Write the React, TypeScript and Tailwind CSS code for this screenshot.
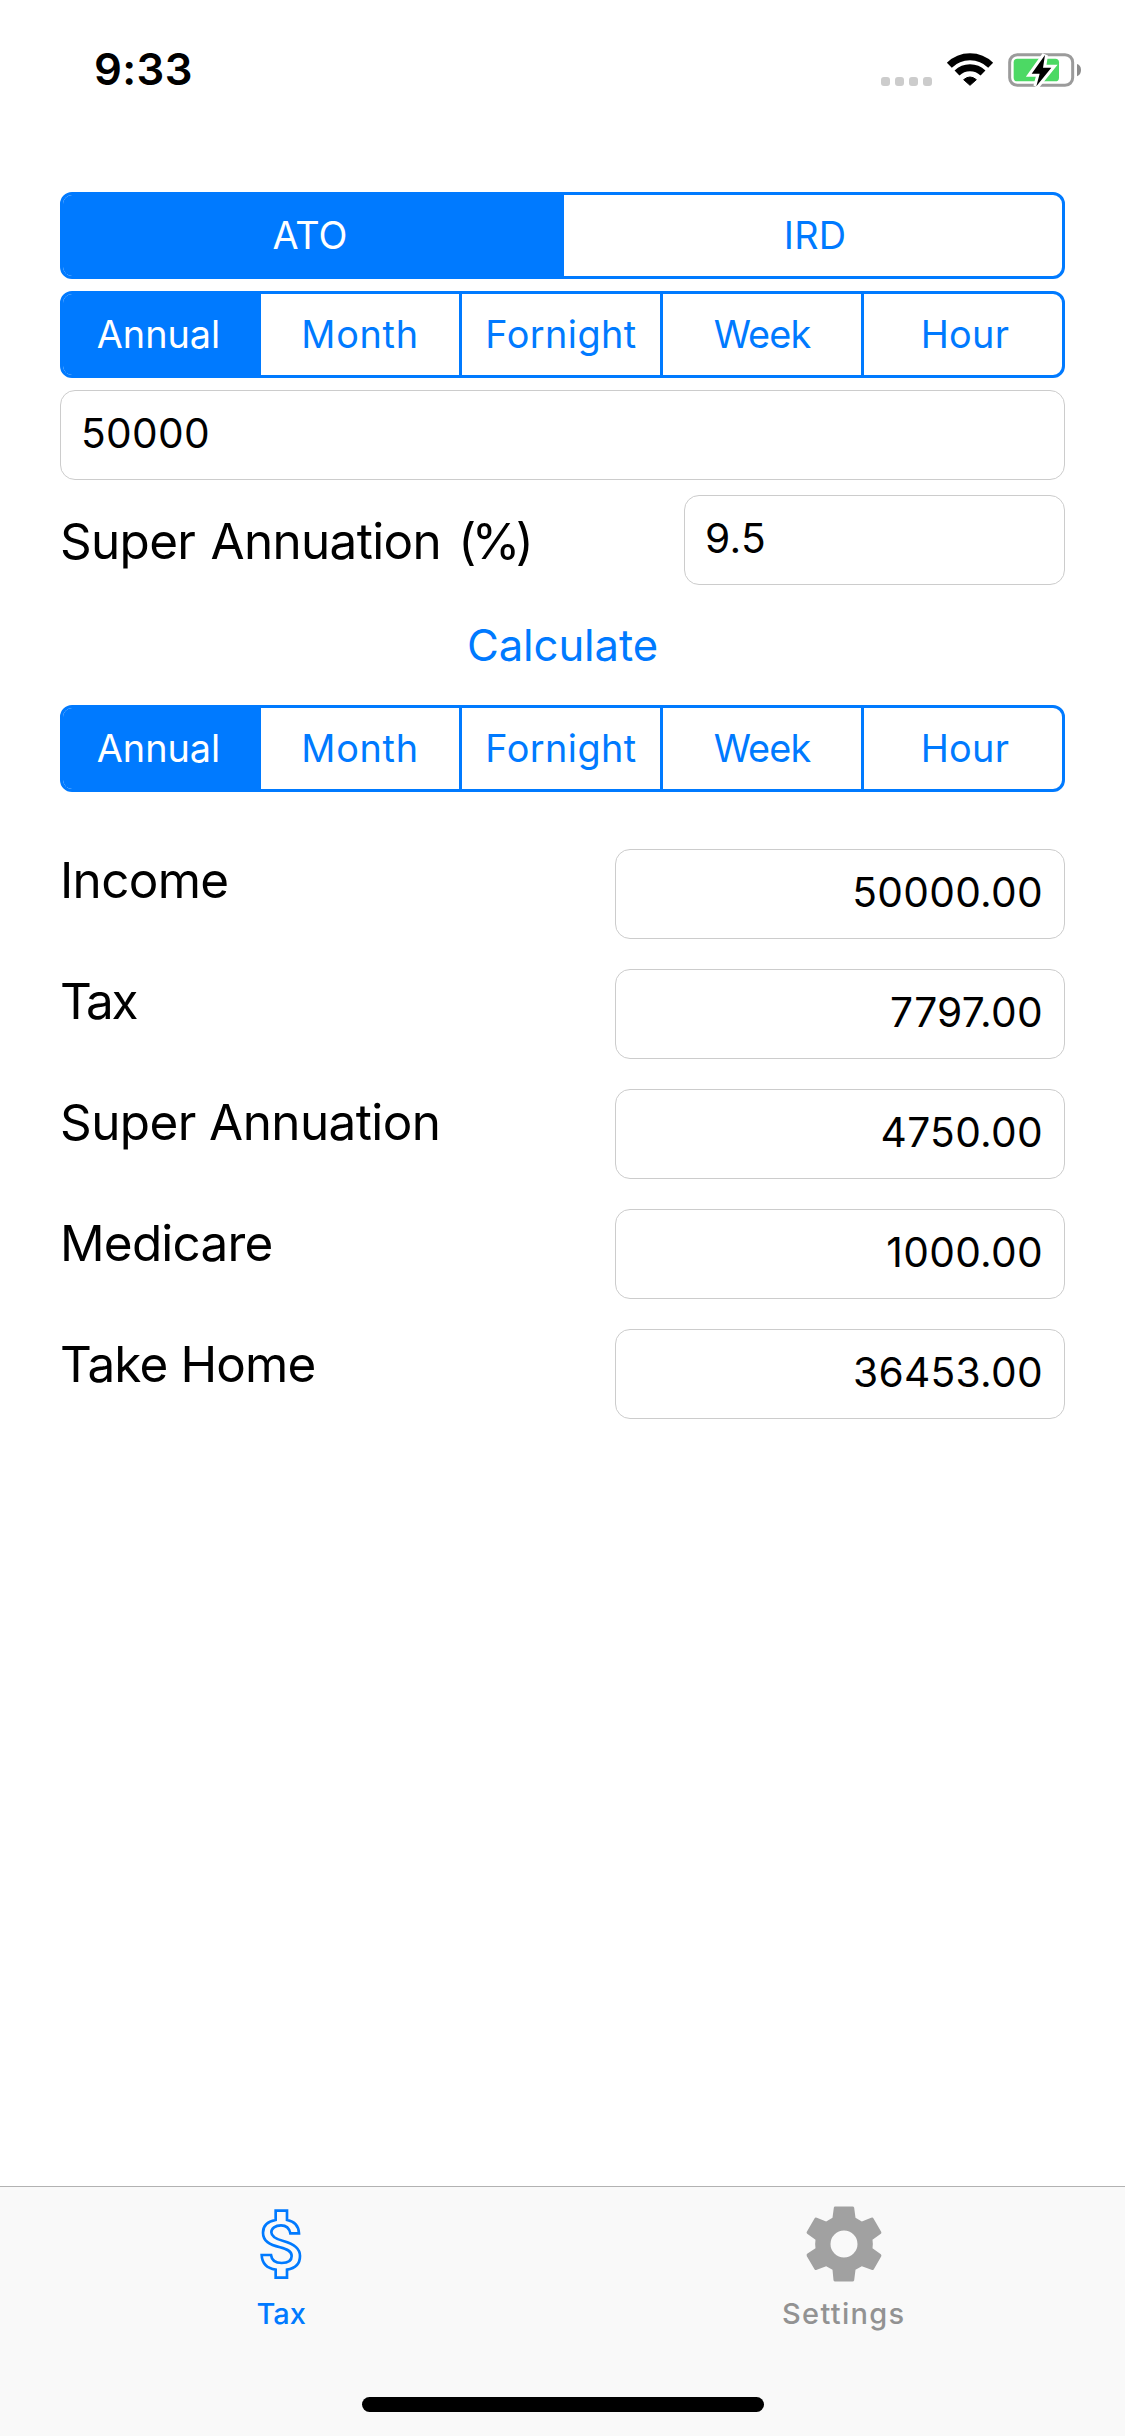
import React, { useState } from "react";
import clsx from "clsx";

type Item = { label: string; tracking?: string };

const authorities: Item[] = [
  { label: "ATO" },
  { label: "IRD", tracking: "tracking-[0.2px]" },
];

const periods: Item[] = [
  { label: "Annual" },
  { label: "Month", tracking: "tracking-[0.72px]" },
  { label: "Fornight", tracking: "tracking-[0.45px]" },
  { label: "Week", tracking: "tracking-[-0.87px]" },
  { label: "Hour", tracking: "tracking-[0.3px]" },
];

const results = [
  { label: "Income", value: "50000.00", tracking: "tracking-[-0.65px]" },
  { label: "Tax", value: "7797.00", tracking: "tracking-[-2.2px]" },
  { label: "Super Annuation", value: "4750.00", tracking: "tracking-[-0.55px]" },
  { label: "Medicare", value: "1000.00", tracking: "tracking-[-0.76px]" },
  { label: "Take Home", value: "36453.00", tracking: "tracking-[-0.85px]" },
];

function Segmented({ items }: { items: Item[] }) {
  const [active, setActive] = useState(0);
  const last = items.length - 1;
  return (
    <div className="flex h-[87px] w-full overflow-hidden rounded-[12px] border-[3px] border-[#007aff] bg-white">
      {items.map((item, i) => (
        <button
          key={item.label}
          onClick={() => setActive(i)}
          className={clsx(
            "flex items-center justify-center border-[#007aff] text-[37.8px] leading-none",
            i < last && "border-r-[3px]",
            items.length === 2 && (i === 0 ? "w-[501px]" : "w-[498px]"),
            items.length === 5 && (i === 0 || i === last ? "w-[198px]" : "w-[201px]"),
            i === 0 && "pr-[4px]",
            i === last && "pl-[4px]",
            i === active ? "bg-[#007aff] text-white" : "text-[#007aff]",
            item.tracking,
          )}
        >
          {item.label}
        </button>
      ))}
    </div>
  );
}

function Field({ value, className }: { value: string; className?: string }) {
  return (
    <div
      className={clsx(
        "flex h-[90px] items-center rounded-[15px] border border-[#cccccc] bg-white pb-px text-[40.7px] leading-none tracking-[0.3px]",
        className,
      )}
    >
      {value}
    </div>
  );
}

function StatusBar() {
  return (
    <header className="flex h-[139px] items-center justify-between pl-[94px] pr-[42px]">
      <span className="text-[43.6px] font-semibold leading-none tracking-[0.4px]">9:33</span>
      <svg className="h-[40px] w-[204px]" viewBox="0 0 612 120">
        <g transform="translate(-57 -57)">
          <g fill="#cccccc">
            <rect x="63" y="138" width="27" height="27" rx="9" />
            <rect x="105" y="138" width="27" height="27" rx="9" />
            <rect x="147" y="138" width="27" height="27" rx="9" />
            <rect x="189" y="138" width="27" height="27" rx="9" />
          </g>
          <g fill="none" stroke="#000" strokeWidth="21">
            <path d="M268 103A88 88 0 0 1 392 103" />
            <path d="M291 126A56 56 0 0 1 369 126" />
          </g>
          <path d="M330 163L311 146Q330 130 349 146Z" stroke="#000" strokeWidth="3" strokeLinejoin="round" />
          <rect x="449" y="71" width="189" height="92" rx="23" fill="none" stroke="#9b9b9b" strokeWidth="9" />
          <rect x="461" y="83" width="136" height="68" rx="11" fill="#4cd964" />
          <path d="M651 99Q663 103 663 117T651 136Z" fill="#8c8c8c" />
          <path
            d="M555 72L515 128H539L529 166L574 110H549Z"
            fill="#000"
            stroke="#fff"
            strokeWidth="18"
            strokeLinejoin="miter"
            paintOrder="stroke"
          />
        </g>
      </svg>
    </header>
  );
}

function DollarIcon() {
  return (
    <svg className="h-[72px] w-[44px]" viewBox="119 113 132 216" fill="none" stroke="#007aff" strokeWidth="8">
      <path d="M169 121H203V149C225 153 238 168 239 189H213C210 173 199 165 185 165C168 165 156 174 156 186C156 199 168 206 192 212C222 220 242 232 242 257C242 280 228 294 203 298V322H169V298C143 294 128 278 127 254H155C157 270 168 278 187 278C206 278 217 270 217 257C217 243 205 237 182 231C150 223 131 212 131 187C131 166 146 153 169 149Z" />
    </svg>
  );
}

function GearIcon() {
  return (
    <svg className="h-[76px] w-[76px]" viewBox="136.5 106.5 228 228" fill="#a1a1a1">
      <path
        fillRule="evenodd"
        d="M224 108H276Q280 108 281 112L285 142L304 153L332 142Q337 140 339 144L362 184Q364 188 361 190L336 208Q338 220 336 233L361 251Q364 254 362 258L340 296Q337 300 333 298L304 287L285 298L281 329Q280 333 276 333H224Q220 333 219 329L216 298L197 287L169 298Q164 300 162 296L139 257Q137 253 140 250L165 233Q163 220 165 208L140 190Q137 187 139 184L162 144Q164 140 169 142L197 153L216 142L220 112Q220 108 224 108ZM250.500 180A40.500 40.500 0 1 0 250.500 261A40.500 40.500 0 1 0 250.500 180Z"
      />
    </svg>
  );
}

export default function App() {
  return (
    <div className="flex h-[2436px] w-[1125px] flex-col bg-white font-['Inter','Liberation_Sans',sans-serif] text-black">
      <StatusBar />

      <main className="flex flex-1 flex-col px-[60px] pt-[53px]">
        <div className="flex flex-col gap-3">
          <Segmented items={authorities} />
          <Segmented items={periods} />
          <Field value="50000" className="pl-[20px]" />
        </div>

        <div className="mt-[15px] flex items-center justify-between">
          <span className="whitespace-nowrap pt-[3px] text-[49.4px] leading-none tracking-[-0.65px] [word-spacing:2px]">
            Super Annuation <span className="ml-[2px] tracking-[-4.5px]">(%)</span>
          </span>
          <Field value="9.5" className="w-[381px] pl-[20px]" />
        </div>

        <button className="flex h-[120px] items-center justify-center pt-px text-[43.6px] leading-none tracking-[-0.08px] text-[#007aff]">
          Calculate
        </button>

        <Segmented items={periods} />

        <div className="mt-[57px] flex justify-between">
          <div className="flex flex-col gap-[61px] pt-px">
            {results.map((row) => (
              <span key={row.label} className={clsx("text-[49.4px] leading-[60px]", row.tracking)}>
                {row.label}
              </span>
            ))}
          </div>
          <div className="flex w-[450px] flex-col gap-[30px]">
            {results.map((row) => (
              <Field key={row.label} value={row.value} className="justify-end pr-[21px]" />
            ))}
          </div>
        </div>
      </main>

      <footer className="flex h-[250px] flex-col border-t border-[#b2b2b2] bg-[#f9f9f9]">
        <nav className="flex h-[209px] text-[29px] font-medium">
          <button className="flex flex-1 flex-col items-center pt-[21px] text-[#007aff]">
            <DollarIcon />
            <span className="mt-[19px] leading-[30px]">Tax</span>
          </button>
          <button className="flex flex-1 flex-col items-center pt-[19px] text-[#929292]">
            <GearIcon />
            <span className="mt-[17px] leading-[30px] tracking-[1.28px]">Settings</span>
          </button>
        </nav>
        <div className="mx-auto mt-px h-[15px] w-[402px] rounded-full bg-black" />
      </footer>
    </div>
  );
}
